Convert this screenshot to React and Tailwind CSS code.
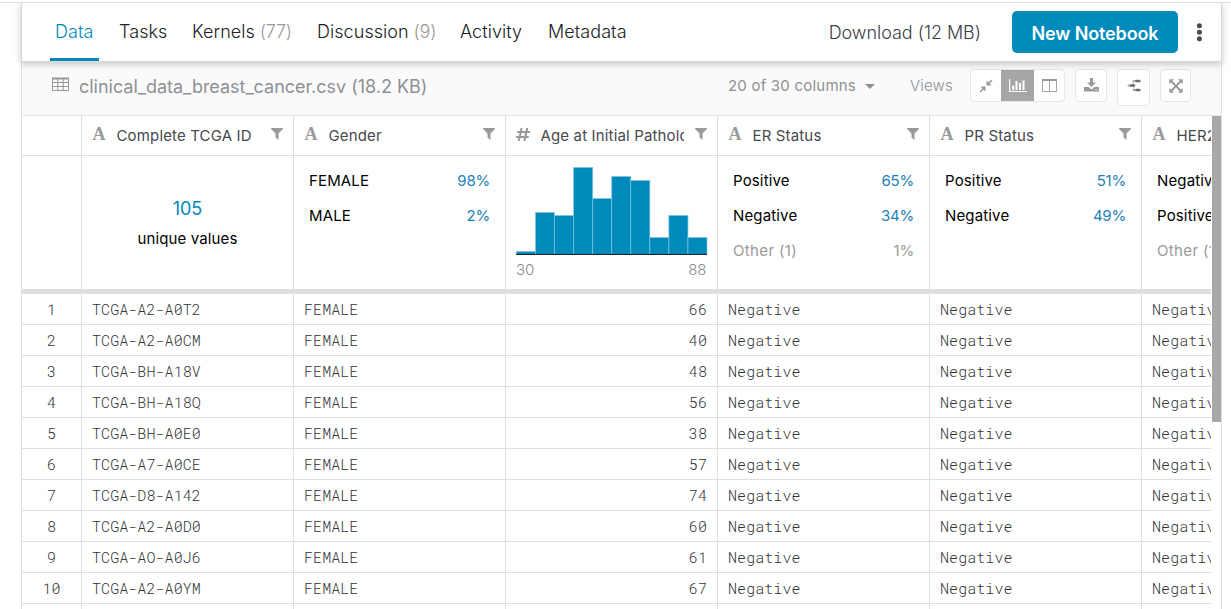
import React from "react";

const ROWS = [
  ["TCGA-A2-A0T2", 66],
  ["TCGA-A2-A0CM", 40],
  ["TCGA-BH-A18V", 48],
  ["TCGA-BH-A18Q", 56],
  ["TCGA-BH-A0E0", 38],
  ["TCGA-A7-A0CE", 57],
  ["TCGA-D8-A142", 74],
  ["TCGA-A2-A0D0", 60],
  ["TCGA-AO-A0J6", 61],
  ["TCGA-A2-A0YM", 67],
];

const BARS = [3, 42, 39, 87, 56, 78, 74, 17, 39, 17];

const GRID = "grid grid-cols-[60px_212px_212px_212px_212px_212px_212px] w-[1332px]";

function Tab({ label, count, width, active }) {
  return (
    <div className={`${width} h-full shrink-0 border-b-[3px] pl-[5px] pt-[17px] ${active ? "border-[#008abc] text-[#008abc]" : "border-transparent text-[#202124]"}`}>
      {label}
      {count && <span className="tracking-[-0.25px] text-[#9a9a9a] font-light"> {count}</span>}
    </div>
  );
}

function FilterIcon() {
  return (
    <svg width="12" height="13" viewBox="0 0 12 13" className="shrink-0 fill-[#999]">
      <path d="M0.5 0H11.5Q12.3 .5 11.7 1.2L7.5 5.5V12L4.5 9.5V5.5L.3 1.2Q-.3 .5 .5 0Z" />
    </svg>
  );
}

function HashIcon() {
  return (
    <svg width="14" height="13" viewBox="0 0 14 13" className="stroke-[#999]" fill="none" strokeWidth="2">
      <path d="M5.6 0L2.8 13M11.2 0L8.4 13M1.2 4H14M0 9H12.8" />
    </svg>
  );
}

function ColumnHead({ title, numeric }) {
  return (
    <div className="flex h-10 items-center overflow-hidden border-b border-r border-[#dedfe0] pl-[10px] pr-[10.5px]">
      <div className="flex h-5 w-[14px] shrink-0 items-center justify-center pb-[3px]">
        {numeric ? <HashIcon /> : <span className="font-['Liberation_Serif',serif] text-[18px] font-bold leading-5 text-[#999]">A</span>}
      </div>
      <div className="ml-[10.5px] flex-1 overflow-hidden whitespace-nowrap text-[15px] leading-5 tracking-[0.15px] text-[#47494d]">{title}</div>
      <div className="ml-[10.5px] pb-[3px]"><FilterIcon /></div>
    </div>
  );
}

function Counts({ items }) {
  return (
    <div className="flex h-[134px] flex-col border-r border-[#dedfe0] pl-[15px] pr-[15px] pt-[8px] text-[15px] tracking-[0.15px]">
      {items.map(([name, pct, muted]) => (
        <div key={name} className={`flex h-[35px] items-center justify-between whitespace-nowrap ${muted ? "text-[#9a9a9a]" : "text-black"}`}>
          <span className={muted ? "tracking-[0.35px]" : ""}>{name}</span>
          <span className={muted ? "tracking-[-0.2px]" : "tracking-[-0.2px] text-[#1c80b8]"}>{pct}</span>
        </div>
      ))}
    </div>
  );
}

function Histogram() {
  return (
    <div className="h-[134px] border-r border-[#dedfe0] pl-[10px] pt-[10px]">
      <svg width="192" height="90" viewBox="0 0 192 90">
        {BARS.map((h, i) => (
          <rect key={i} x={0.5 + i * 19.05} y={88.5 - h} width="19.05" height={h} fill="#008abc" stroke="#80c4dd" strokeWidth="0.7" />
        ))}
        <path d="M0 88.5H191" stroke="#202124" />
      </svg>
      <div className="mt-[4px] flex justify-between pr-[10.5px] text-[15px] font-light leading-5 text-[#8a8a8a]">
        <span>30</span>
        <span>88</span>
      </div>
    </div>
  );
}

function Cell({ children, align = "justify-start pl-[10px]" }) {
  return <div className={`flex h-[31px] items-center border-b border-r border-[#dedfe0] ${align}`}>{children}</div>;
}

function CollapseIcon() {
  return (
    <svg width="14" height="14" viewBox="0 0 14 14" fill="none" stroke="#999" strokeWidth="1.7">
      <path d="M13 1L9 5M1 13L5 9" />
      <path d="M7.5 1.5V6.5H12.5ZM6.5 12.5V7.5H1.5Z" fill="#999" stroke="none" />
    </svg>
  );
}

function ChartIcon() {
  return (
    <svg width="18" height="15" viewBox="0 0 18 15" fill="none" stroke="#fff">
      <path d="M.7 1V13.5H18" strokeWidth="1.2" />
      <path d="M4.2 12V7.5M7.5 12V3M11 12V5M14.5 12V2.5" strokeWidth="2" />
    </svg>
  );
}

function ColumnsIcon() {
  return (
    <svg width="15" height="13" viewBox="0 0 15 13" fill="none" stroke="#a5a5a5">
      <path d="M.5 1V12.5H14.5V1M7.5 1V12.5" />
      <path d="M0 1H15" strokeWidth="2" stroke="#999" />
    </svg>
  );
}

function DownloadIcon() {
  return (
    <svg width="15" height="14" viewBox="0 0 15 14" fill="#999">
      <path d="M6 0H9V4.5H12L7.5 9L3 4.5H6Z" />
      <path d="M0 9H4.5L7.5 11.5L10.5 9H15V13.5H0Z" />
      <path d="M10.5 11.5H11.5M12.5 11.5H13.5" stroke="#fff" strokeWidth=".8" />
    </svg>
  );
}

function SplitIcon() {
  return (
    <svg width="14" height="13" viewBox="0 0 14 13" fill="none">
      <path d="M7 2L5.5 6.5L7 11" stroke="#bbb" strokeWidth="1" />
      <path d="M6.5 2H9M1.5 6.5H4M6.5 11H9" stroke="#aaa" strokeWidth="2" strokeLinecap="round" />
      <path d="M9.5 2H12.3M4 6.5H7M9.5 11H12.3" stroke="#6c6c6c" strokeWidth="2.6" strokeLinecap="round" />
    </svg>
  );
}

function ExpandIcon() {
  return (
    <svg width="14" height="14" viewBox="0 0 14 14" fill="#999">
      <path d="M2 2L12 12M12 2L2 12" stroke="#999" strokeWidth="1.9" />
      <path d="M.3 .3H5L.3 5ZM13.7 .3V5L9 .3ZM.3 13.7V9L5 13.7ZM13.7 13.7H9L13.7 9Z" />
    </svg>
  );
}

const BTN = "flex items-center justify-center rounded-[4px] border border-[#e6e6e6] bg-white";

export default function App() {
  return (
    <div className="flex h-[609px] w-[1231px] flex-col overflow-hidden bg-white pt-[2px] font-['Inter',sans-serif]">
      <div className="h-px shrink-0 bg-[#dedfe0]" />
      <div className="ml-[21px] flex w-[1201px] flex-1 flex-col">
        <header className="relative z-10 flex h-[59px] shrink-0 border-b border-l border-r border-[#d5d8d8] bg-white pl-[28px] shadow-[0_2px_7px_rgba(0,0,0,0.22)] [clip-path:inset(0_-12px_-14px_-12px)]">
          <nav className="flex h-full flex-1 whitespace-nowrap text-[18px] font-[350] leading-6 tracking-[0.06px]">
            <Tab label="Data" width="w-[49px]" active />
            <div className="w-[15px] shrink-0" />
            <Tab label="Tasks" width="w-[73px]" />
            <Tab label="Kernels" count="(77)" width="w-[125px]" />
            <Tab label="Discussion" count="(9)" width="w-[143px]" />
            <Tab label="Activity" width="w-[88px]" />
            <Tab label="Metadata" width="w-[90px]" />
          </nav>
          <div className="flex items-start">
            <span className="mr-[31px] mt-[18px] whitespace-nowrap text-[18px] font-light leading-6 tracking-[-0.04px] text-[#3c4043]">Download (12 MB)</span>
            <button className="mt-[8px] h-[42px] w-[166px] whitespace-nowrap rounded-[5px] bg-[#008abc] pt-[2px] text-[18px] font-semibold tracking-[-0.13px] text-white">New Notebook</button>
            <svg width="6" height="20" viewBox="0 0 6 20" className="ml-[18px] mr-[19px] mt-[19px] fill-[#4a4a4a]">
              <circle cx="3.4" cy="3.7" r="2.5" />
              <circle cx="3.4" cy="10.2" r="2.5" />
              <circle cx="3.4" cy="16.7" r="2.5" />
            </svg>
          </div>
        </header>

        <section className="flex flex-1 flex-col border-l border-r border-[#dedfe0]">
          <div className="flex h-[54px] shrink-0 items-start border-b border-[#e4e5e6] bg-[#fafafa] pr-[30px] text-[#8e9194]">
            <svg width="17" height="15" viewBox="0 0 17 15" fill="none" stroke="#999" className="ml-[30px] mt-[15px]">
              <path d="M.5 1V13.5H16.5V1M.5 5.5H16.5M.5 9.5H16.5M5.8 2V13.5M11.2 2V13.5" />
              <path d="M0 1.5H17" strokeWidth="2" />
            </svg>
            <span className="ml-[10px] mt-[13px] flex-1 whitespace-nowrap text-[18px] font-[370] leading-6 tracking-[-0.02px]">clinical_data_breast_cancer.csv (18.2 KB)</span>
            <span className="mt-[14px] whitespace-nowrap text-[15px] font-[370] leading-5 tracking-[0.22px]">20 of 30 columns</span>
            <svg width="10" height="5" viewBox="0 0 10 5" className="ml-[9px] mr-[35px] mt-[22px] fill-[#8e9194]"><path d="M0 0H10L5 5Z" /></svg>
            <span className="mr-[16px] mt-[14px] w-[44px] whitespace-nowrap text-[15px] font-light leading-5 tracking-[0.2px]">Views</span>
            <div className="mt-[7px] flex h-[33px] w-[95px] shrink-0 overflow-hidden rounded-[4px] border border-[#e6e6e6] bg-white">
              <div className="flex w-[30px] items-center justify-center"><CollapseIcon /></div>
              <div className="flex w-[33px] items-center justify-center bg-[#a6a6a6]"><ChartIcon /></div>
              <div className="flex w-[30px] items-center justify-center"><ColumnsIcon /></div>
            </div>
            <div className={`${BTN} ml-[10px] mt-[7px] h-[33px] w-[32px] pb-[2px]`}><DownloadIcon /></div>
            <div className={`${BTN} ml-[10px] mt-[7px] h-[37px] w-[33px] pb-[4px]`}><SplitIcon /></div>
            <div className={`${BTN} ml-[10px] mt-[7px] h-[33px] w-[31px]`}><ExpandIcon /></div>
          </div>

          <div className="flex h-[493px] overflow-hidden">
            <div className="w-[1189px] shrink-0 overflow-hidden">
              <div className={GRID}>
                <div className="h-10 border-b border-r border-[#dedfe0]" />
                <ColumnHead title="Complete TCGA ID" />
                <ColumnHead title="Gender" />
                <ColumnHead title="Age at Initial Pathologic Diagnosis" numeric />
                <ColumnHead title="ER Status" />
                <ColumnHead title="PR Status" />
                <ColumnHead title="HER2 Final Status" />
              </div>
              <div className={`${GRID} h-[138px] border-b-[5px] border-[#dedfe0]`}>
                <div className="h-[134px] border-r border-[#dedfe0]" />
                <div className="flex h-[134px] flex-col items-center border-r border-[#dedfe0] pt-[41px] text-[15px]">
                  <div className="text-[18px] leading-6 text-[#008abc]">105</div>
                  <div className="mt-[8px] leading-5 tracking-[0.12px]">unique values</div>
                </div>
                <Counts items={[["FEMALE", "98%"], ["MALE", "2%"]]} />
                <Histogram />
                <Counts items={[["Positive", "65%"], ["Negative", "34%"], ["Other (1)", "1%", true]]} />
                <Counts items={[["Positive", "51%"], ["Negative", "49%"]]} />
                <Counts items={[["Negative", "72%"], ["Positive", "26%"], ["Other (1)", "1%", true]]} />
              </div>
              <div className={`${GRID} whitespace-nowrap font-['Roboto_Mono','Liberation_Mono',monospace] text-[15px] font-[350] tracking-[0.07px] text-[#303235]`}>
                {ROWS.map(([id, age], i) => (
                  <React.Fragment key={id}>
                    <Cell align="justify-center">{i + 1}</Cell>
                    <Cell>{id}</Cell>
                    <Cell>FEMALE</Cell>
                    <Cell align="justify-end pr-[10px]">{age}</Cell>
                    <Cell>Negative</Cell>
                    <Cell>Negative</Cell>
                    <Cell>Negative</Cell>
                  </React.Fragment>
                ))}
                {[0, 1, 2, 3, 4, 5, 6].map((n) => (
                  <Cell key={n} />
                ))}
              </div>
            </div>
            <div className="ml-px h-[306px] w-[9px] bg-[#a8a8a8]" />
          </div>
        </section>
      </div>
    </div>
  );
}
